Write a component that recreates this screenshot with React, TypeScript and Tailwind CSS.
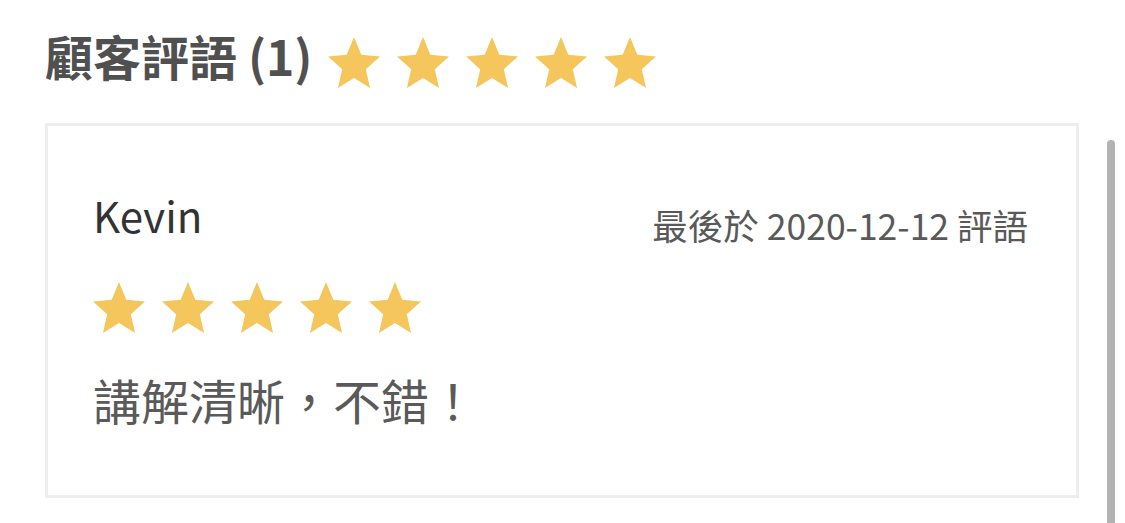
import React from "react";

const STAR = "M12 2 L14.81 8.63 L22 9.24 L16.54 13.97 L18.18 21 L12 17.27 L5.82 21 L7.46 13.97 L2 9.24 L9.19 8.63 Z";

function Star() {
  return (
    <svg width="52" height="51" viewBox="2 2 20 19" preserveAspectRatio="none" className="block shrink-0">
      <path d={STAR} fill="#f4c65c" />
    </svg>
  );
}

function Stars() {
  return (
    <div className="flex gap-[17px]">
      {[0, 1, 2, 3, 4].map((i) => (
        <Star key={i} />
      ))}
    </div>
  );
}

export default function App() {
  return (
    <div
      className="relative w-[1125px] h-[523px] overflow-hidden bg-white pl-[45px] pr-[46px]"
      style={{ fontFamily: '"Noto Sans CJK TC", "Noto Sans", sans-serif' }}
    >
      <div className="flex items-start pt-[31px]">
        <h2 className="text-[48px] leading-[48px] font-bold text-[#505050]">顧客評語 (1)</h2>
        <div className="ml-[15px] mt-[6px]">
          <Stars />
        </div>
      </div>

      <div className="mt-[35px] border-[3px] border-[#eeeeee] pl-[45px] pr-[48px] pt-[68px] pb-[72px]">
        <div className="flex items-start justify-between">
          <div className="text-[42px] leading-[42px] text-[#333333]">Kevin</div>
          <div className="mt-[13px] text-[35.5px] leading-[36px] text-[#595959]">最後於 2020-12-12 評語</div>
        </div>
        <div className="mt-[39px]">
          <Stars />
        </div>
        <p className="mt-[42px] text-[48px] leading-[48px] text-[#5a5a5a]">講解清晰，不錯！</p>
      </div>

      <div className="absolute left-[1107px] top-[140px] w-[8px] h-[400px] rounded-t-full bg-[#b3b3b3]" />
    </div>
  );
}
